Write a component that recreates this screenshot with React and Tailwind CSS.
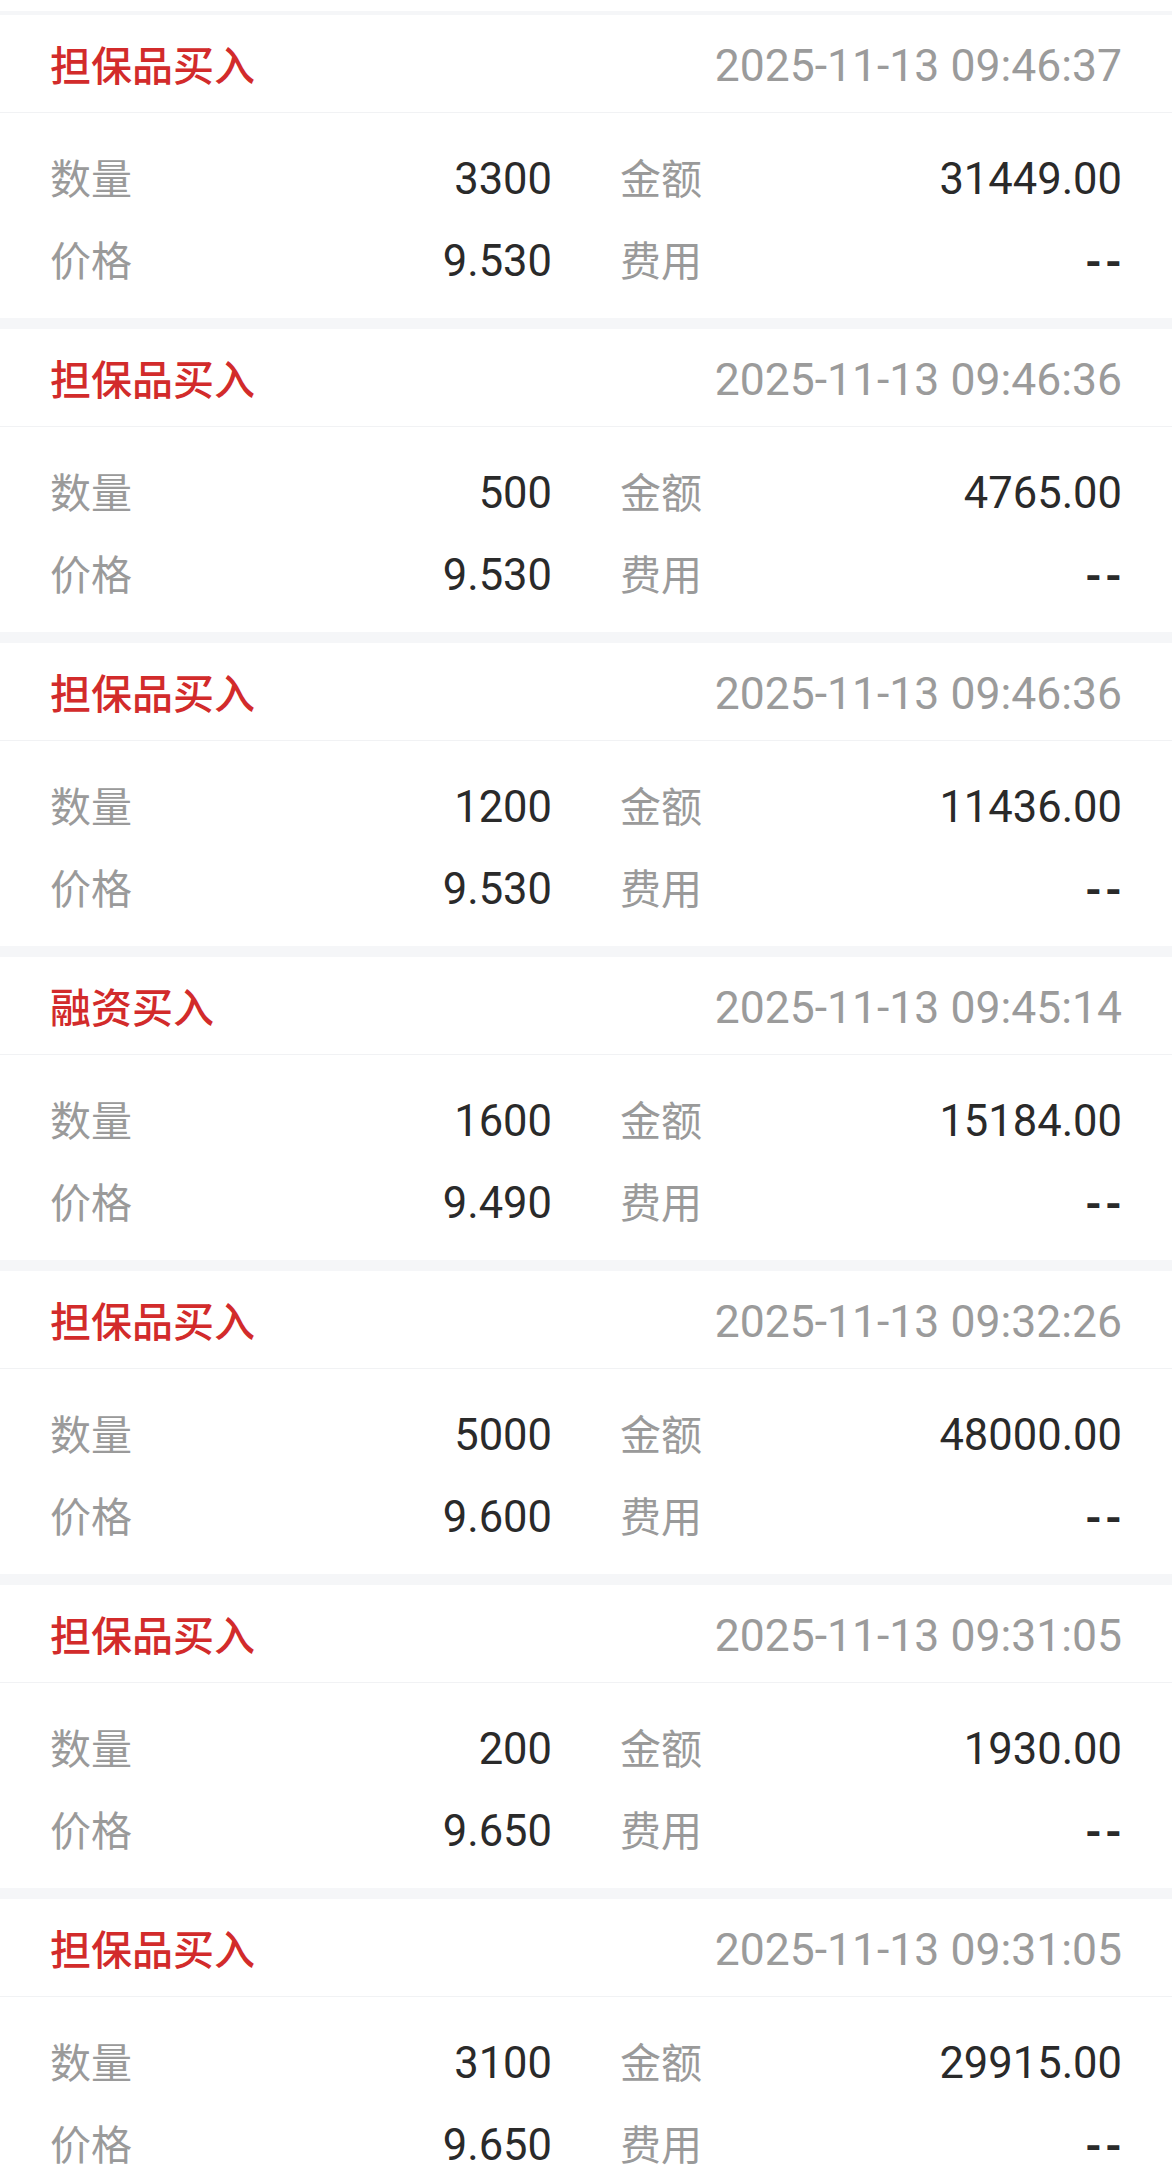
import React from 'react';

const records = [
  { type: '担保品买入', time: '2025-11-13 09:46:37', qty: '3300', amount: '31449.00', price: '9.530', fee: '--' },
  { type: '担保品买入', time: '2025-11-13 09:46:36', qty: '500', amount: '4765.00', price: '9.530', fee: '--' },
  { type: '担保品买入', time: '2025-11-13 09:46:36', qty: '1200', amount: '11436.00', price: '9.530', fee: '--' },
  { type: '融资买入', time: '2025-11-13 09:45:14', qty: '1600', amount: '15184.00', price: '9.490', fee: '--' },
  { type: '担保品买入', time: '2025-11-13 09:32:26', qty: '5000', amount: '48000.00', price: '9.600', fee: '--' },
  { type: '担保品买入', time: '2025-11-13 09:31:05', qty: '200', amount: '1930.00', price: '9.650', fee: '--' },
  { type: '担保品买入', time: '2025-11-13 09:31:05', qty: '3100', amount: '29915.00', price: '9.650', fee: '--' },
];

const cjk = "font-['Noto_Sans_CJK_SC','Noto_Sans',sans-serif]";
const num = "font-['Roboto','Noto_Sans_CJK_SC',sans-serif]";

function Field({ label, value }) {
  const empty = value === '--';
  return (
    <div className="h-[82px] flex items-center justify-between">
      <span className={`${cjk} text-[41px] leading-none mb-[2px] text-[#9a9a9a]`}>{label}</span>
      {empty ? (
        <span className={`${num} text-[43px] leading-none mt-[6px] font-bold tracking-[3px] -mr-[3px] text-[#2a2a2a]`}>--</span>
      ) : (
        <span className={`${num} text-[43.5px] leading-none mt-[6px] text-[#2a2a2a]`}>{value}</span>
      )}
    </div>
  );
}

function TradeCard({ item }) {
  return (
    <div className="bg-white">
      {/* header: trade type + timestamp */}
      <div className="h-[98px] px-[50px] flex items-center justify-between border-b border-[#f1f2f4]">
        <span className={`${cjk} text-[41px] leading-none font-medium text-[#d22b2b]`}>{item.type}</span>
        <span className={`${num} text-[44.5px] leading-none mt-[5px] text-[#9b9b9b]`}>{item.time}</span>
      </div>
      {/* body: two columns of label/value pairs */}
      <div className="px-[50px] pt-[23px] pb-[18px] grid grid-cols-2 gap-x-[68px]">
        <Field label="数量" value={item.qty} />
        <Field label="金额" value={item.amount} />
        <Field label="价格" value={item.price} />
        <Field label="费用" value={item.fee} />
      </div>
    </div>
  );
}

export default function App() {
  return (
    <div className="w-full h-[2169px] overflow-hidden bg-[#f5f6f8]">
      <div className="h-[11px] bg-white" />
      <div className="pt-[4px] flex flex-col gap-[11px]">
        {records.map((r, i) => (
          <TradeCard key={i} item={r} />
        ))}
      </div>
    </div>
  );
}
